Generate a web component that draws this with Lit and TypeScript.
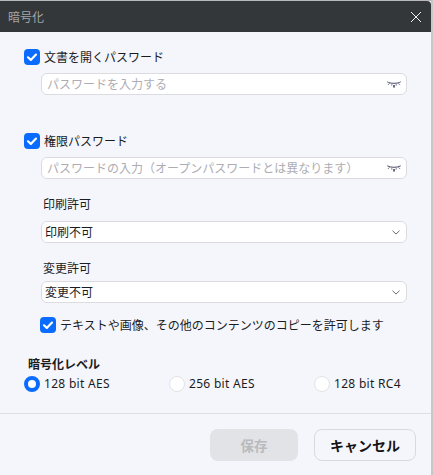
import { LitElement, html, css } from "lit";
import { customElement } from "lit/decorators.js";

const checkIcon = html`<svg class="tick" viewBox="0 0 16 16" width="16" height="16"><path d="M4 8.300l2.800 2.600L12 5.600" fill="none" stroke="#fff" stroke-width="2.200" stroke-linecap="round" stroke-linejoin="round"/></svg>`;
const eye = html`<svg class="eye" viewBox="0 0 14 8" width="14" height="8"><g fill="none" stroke="#4a4a68"><path d="M0.300 0.800C3 2.800 11 2.800 13.700 0.800" stroke-width="1"/><path d="M2.400 2.400L1 3.900M11.600 2.400l1.400 1.500M4.800 3.200v1.500M9.200 3.200v1.500" stroke-width=".8"/></g><rect x="6.200" y="4" width="1.600" height="2.600" fill="#4a4a68"/></svg>`;
const chevron = html`<svg class="chev" viewBox="0 0 8 5" width="8" height="5"><path d="M.5.700l3.500 3.400L7.500.700" fill="none" stroke="#6a6a72" stroke-width="1"/></svg>`;

@customElement("app-root")
export class AppRoot extends LitElement {
  static styles = css`
    :host { display: block; width: 433px; height: 475px; font-family: "Noto Sans CJK JP", "Noto Sans", sans-serif; font-size: 12px; color: #1c1c1e; background: #f5f6fb; overflow: hidden; }
    .win { height: 475px; box-sizing: border-box; border-top: 1px solid #b9b9b9; border-right: 2px solid #c8c8cb; display: flex; flex-direction: column; }
    .head { height: 31px; flex: none; background: #33373a; color: #a3a6a8; display: flex; align-items: center; justify-content: space-between; padding: 0 9px 0 8px; font-size: 12px; border-radius: 0 4px 0 0; }
    .close { display: flex; }
    .body { flex: none; height: 381px; box-sizing: border-box; padding: 17px 24px 0 24px; display: flex; flex-direction: column; }
    .check { display: flex; align-items: center; gap: 4px; height: 16px; line-height: 16px; }
    .box { width: 16px; height: 16px; border-radius: 4px; background: #0a6cff; display: flex; flex: none; }
    .field { margin-left: 17px; width: 366px; height: 22px; box-sizing: border-box; background: #fff; border: 1px solid #dcdce0; border-radius: 6px; display: flex; align-items: center; justify-content: space-between; }
    .pw { margin-top: 8px; padding: 0 5px 0 5px; color: #adadb3; font-size: 12px; line-height: 20px; }
    .sel { padding: 0 6px 0 3px; color: #1c1c1e; font-size: 12px; line-height: 20px; }
    .eye { flex: none; margin-top: 2px; }
    .chev { flex: none; margin-top: 1px; }
    .gap-a { height: 38px; flex: none; }
    .lbl { margin-left: 19px; height: 18px; line-height: 18px; }
    .lbl.one { margin-top: 16px; margin-bottom: 8px; }
    .lbl.two { margin-top: 16px; margin-bottom: 4px; }
    .sub { margin: 14px 0 0 16px; }
    .title { margin: 23px 0 0 4px; height: 16px; line-height: 16px; font-weight: 700; }
    .radios { display: flex; margin-top: 4px; height: 16px; }
    .radio { display: flex; align-items: center; gap: 4px; line-height: 16px; font-family: "Noto Sans", sans-serif; font-size: 12px; letter-spacing: 0.3px; width: 145px; }
    .radio:last-child { width: auto; }
    .dot { width: 16px; height: 16px; box-sizing: border-box; border-radius: 50%; background: #fff; border: 1px solid #e2e2e6; flex: none; }
    .dot.on { border: 4.500px solid #0a6cff; }
    .foot { flex: none; border-top: 1px solid #dfdfe5; display: flex; justify-content: flex-end; gap: 16px; padding: 15px 15px 0 0; }
    button { all: unset; box-sizing: border-box; height: 32px; border-radius: 8px; display: flex; align-items: center; justify-content: center; font-family: inherit; font-weight: 700; font-size: 14px; }
    .save { width: 88px; background: #e2e3e6; color: #b9babd; font-size: 13.500px; }
    .cancel { width: 102px; border: 1px solid #d9d9de; color: #141416; background: #f5f6fb; }
  `;

  private cb(text: string, cls = "") {
    return html`<div class="check ${cls}"><span class="box">${checkIcon}</span><span>${text}</span></div>`;
  }

  render() {
    return html`<div class="win">
      <div class="head"><span>暗号化</span>
        <span class="close"><svg viewBox="0 0 12 12" width="12" height="12"><path d="M1 1l10 10M11 1L1 11" stroke="#f2f2f2" stroke-width="1" fill="none"/></svg></span></div>
      <div class="body">
        ${this.cb("文書を開くパスワード")}
        <div class="field pw"><span>パスワードを入力する</span>${eye}</div>
        <div class="gap-a"></div>
        ${this.cb("権限パスワード")}
        <div class="field pw"><span>パスワードの入力（オープンパスワードとは異なります）</span>${eye}</div>
        <div class="lbl one">印刷許可</div>
        <div class="field sel"><span>印刷不可</span>${chevron}</div>
        <div class="lbl two">変更許可</div>
        <div class="field sel"><span>変更不可</span>${chevron}</div>
        ${this.cb("テキストや画像、その他のコンテンツのコピーを許可します", "sub")}
        <div class="title">暗号化レベル</div>
        <div class="radios">
          <div class="radio"><span class="dot on"></span>128 bit AES</div>
          <div class="radio"><span class="dot"></span>256 bit AES</div>
          <div class="radio"><span class="dot"></span>128 bit RC4</div>
        </div>
      </div>
      <div class="foot">
        <button class="save">保存</button>
        <button class="cancel">キャンセル</button>
      </div>
    </div>`;
  }
}
